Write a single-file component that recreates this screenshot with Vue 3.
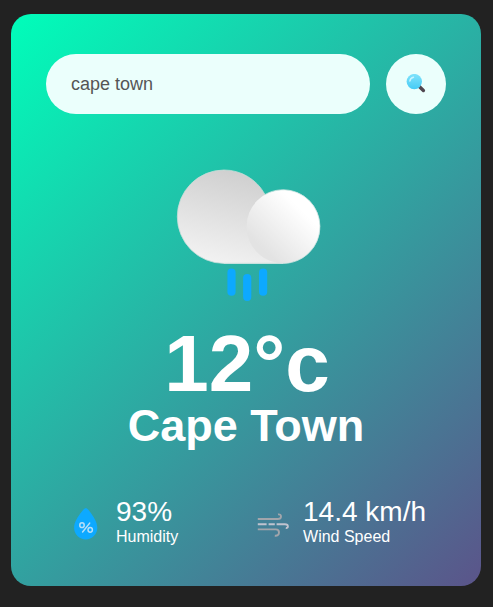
<script setup>
import { ref } from 'vue'

const query = ref('cape town')
const weather = { temp: '12°c', city: 'Cape Town', humidity: '93%', wind: '14.4 km/h' }
</script>

<template>
  <main class="card">
    <form class="search" @submit.prevent>
      <input v-model="query" type="text" spellcheck="false" />
      <button type="submit" aria-label="Search">
        <svg width="20" height="20" viewBox="0 0.7 20 20">
          <defs>
            <linearGradient id="lens" x1="0" y1="0" x2="0" y2="1">
              <stop offset="0" stop-color="#80e3fb" />
              <stop offset="1" stop-color="#45cbf5" />
            </linearGradient>
          </defs>
          <path d="M13 13 17.4 17.2" stroke="#50464f" stroke-width="3.4" stroke-linecap="round" />
          <circle cx="8.3" cy="8.3" r="7.7" fill="url(#lens)" />
          <path d="M3.9 7.7C4.2 5.6 5.6 4.3 7.5 3.9" fill="none" stroke="#c9f5ff" stroke-width="1.5" stroke-linecap="round" />
        </svg>
      </button>
    </form>

    <section class="weather">
      <svg class="cloud" width="170" height="170" viewBox="0 0 170 170">
        <defs>
          <linearGradient id="back" gradientUnits="userSpaceOnUse" x1="78" y1="30" x2="55" y2="119">
            <stop offset="0" stop-color="#d0d0d0" />
            <stop offset="1" stop-color="#f2f2f2" />
          </linearGradient>
          <linearGradient id="front" x1="0.72" y1="0.25" x2="0.2" y2="0.78">
            <stop offset="0" stop-color="#ffffff" />
            <stop offset="1" stop-color="#e3e3e3" />
          </linearGradient>
        </defs>
        <path d="M63 26A46.7 46.7 0 0 0 16.3 72.7A46.7 46.7 0 0 0 63 119.4H122V73L103.7 50A46.7 46.7 0 0 0 63 26Z" fill="url(#back)" stroke="#c5ddd8" stroke-width="0.8" />
        <circle cx="122.3" cy="82.6" r="36.8" fill="url(#front)" />
        <path d="M103.7 50.7A36.8 36.8 0 1 1 122.3 119.4H63" fill="none" stroke="#d0e5e2" stroke-width="0.8" />
        <g fill="#0da9ff">
          <rect x="66.4" y="124.6" width="8.2" height="27.2" rx="4.1" />
          <rect x="82.1" y="130" width="8.2" height="27.1" rx="4.1" />
          <rect x="98" y="124.6" width="8.2" height="27.2" rx="4.1" />
        </g>
      </svg>
      <h1>{{ weather.temp }}</h1>
      <h2>{{ weather.city }}</h2>
      <div class="details">
        <div class="col">
          <svg width="40" height="40" viewBox="0 0 40 40">
            <path d="M19.8 5.2C21 5.2 22 6.2 23.3 8C27.7 13.6 31.3 19.2 31.3 24.8A11.6 11.6 0 0 1 8.1 24.8C8.1 19.2 11.8 13.6 16.3 8C17.6 6.2 18.6 5.2 19.8 5.2Z" fill="#0da9ff" />
            <g fill="none" stroke="#b7dff8" stroke-width="1.5" stroke-linecap="round">
              <ellipse cx="16" cy="22.2" rx="2.2" ry="2.4" />
              <ellipse cx="24.2" cy="26.8" rx="2.2" ry="2.4" />
              <path d="M23.7 20.1 16.6 29" />
            </g>
          </svg>
          <div>
            <p class="value">{{ weather.humidity }}</p>
            <p>Humidity</p>
          </div>
        </div>
        <div class="col">
          <svg width="40" height="40" viewBox="0 0 40 40" fill="none" stroke-width="1.9">
            <g stroke="#a2a5ab">
              <path d="M4.8 16H24.6C27.2 16 28 14.8 28 13.4C28 11.9 26.8 11.1 25 11.4" />
              <path d="M4.8 26.4H22.7C25 26.4 26 27.8 26 29.6C26 31.8 24.5 33 21.8 32.7" />
            </g>
            <path d="M4.8 21.2H13.6M15.6 21.2H21.8M23.6 21.2H31.8C33.9 21.2 34.9 22.2 34.9 23.4C34.9 24.6 33.9 25.2 32.8 24.9" stroke="#c0c3cf" />
          </svg>
          <div>
            <p class="value">{{ weather.wind }}</p>
            <p>Wind Speed</p>
          </div>
        </div>
      </div>
    </section>
  </main>
</template>

<style>
body {
  background: #222;
}
</style>

<style scoped>
.card {
  box-sizing: border-box;
  width: 470px;
  height: 572px;
  margin: 14px 0 0 11px;
  padding: 40px 35px;
  border-radius: 20px;
  background: linear-gradient(135deg, #00feba, #5b548a);
  color: #fff;
  font-family: "Liberation Sans", Arial, sans-serif;
  text-align: center;
}
.search {
  display: flex;
  align-items: center;
  justify-content: space-between;
}
.search input {
  flex: 1;
  min-width: 0;
  box-sizing: border-box;
  height: 60px;
  margin-right: 16px;
  padding: 10px 25px;
  border: 0;
  outline: 0;
  border-radius: 30px;
  background: #ebfffc;
  color: #555;
  font: 18px "Liberation Sans", Arial, sans-serif;
}
.search button {
  display: flex;
  align-items: center;
  justify-content: center;
  width: 60px;
  height: 60px;
  padding: 0;
  border: 0;
  border-radius: 50%;
  background: #ebfffc;
}
.cloud {
  display: block;
  margin: 30px auto 0;
}
h1 {
  margin: 10px 0 0;
  padding-left: 2px;
  font-size: 80px;
  line-height: 80px;
}
h2 {
  margin: 0;
  font-size: 45px;
  line-height: 44px;
}
.details {
  display: flex;
  align-items: center;
  justify-content: space-between;
  margin-top: 48px;
  padding: 0 20px;
}
.col {
  display: flex;
  align-items: flex-start;
  text-align: left;
}
.col svg {
  margin: 7px 10px 0 0;
}
p {
  margin: 0;
  font-size: 16px;
  line-height: 18px;
}
.value {
  font-size: 28px;
  line-height: 32px;
}
</style>
